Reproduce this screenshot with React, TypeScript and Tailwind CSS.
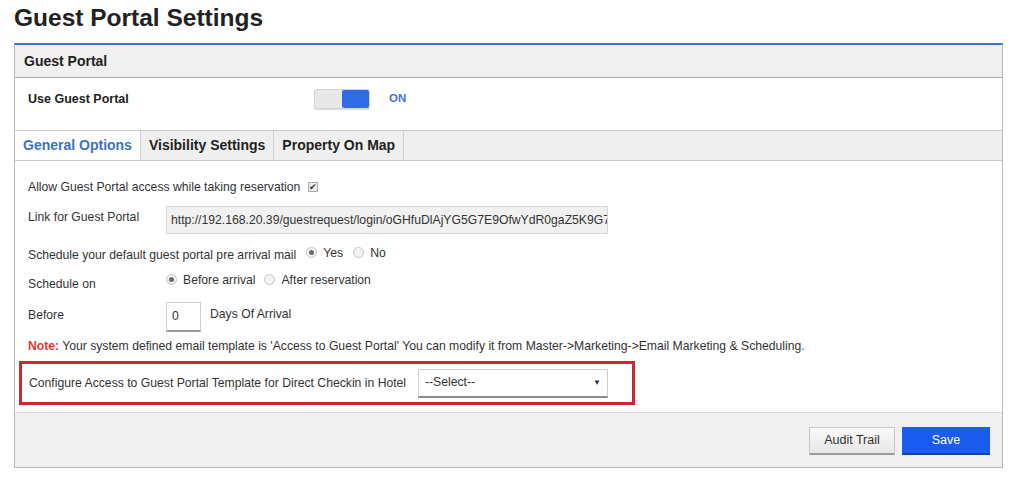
import React from "react";

function Radio({ checked }: { checked?: boolean }) {
  return (
    <span className="inline-flex h-[11px] w-[11px] items-center justify-center rounded-full border border-[#c4c4c4] bg-[#f4f4f4]">
      {checked && <span className="h-[5px] w-[5px] rounded-full bg-[#6b6b6b]" />}
    </span>
  );
}

function Tab({ label, active }: { label: string; active?: boolean }) {
  return (
    <div
      className={
        "flex h-full items-center border-r border-[#cfcfcf] px-[8px] text-[14px] font-bold " +
        (active ? "bg-white text-[#3a72c4]" : "bg-[#efefef] text-[#222]")
      }
    >
      {label}
    </div>
  );
}

export default function App() {
  return (
    <div className="min-h-[484px] bg-white font-['Liberation_Sans',Arial,sans-serif] text-[#333]">
      <h1 className="px-[14px] pt-[3px] text-[24.5px] font-bold leading-[30px] text-[#222]">Guest Portal Settings</h1>

      <div className="mx-[14px] mt-[10px] w-[989px] border border-t-2 border-[#b9b9b9] border-t-[#3f73d1]">
        {/* panel heading */}
        <div className="flex h-[33px] items-center border-b border-[#a9a9a9] bg-[#f0f0f0] px-[9px] text-[14px] font-bold text-[#222]">
          Guest Portal
        </div>

        <div className="flex h-[52px] items-center pb-[10px] pl-[13px]">
          <span className="w-[286px] text-[12.5px] font-bold text-[#222]">Use Guest Portal</span>
          <div className="flex h-[20px] w-[56px] overflow-hidden rounded-[2px] border border-[#d4d4d4] bg-[#e8e8e8] shadow-[0_1px_1px_rgba(0,0,0,0.15)]">
            <div className="flex-1" />
            <div className="w-[27px] rounded-[2px] bg-[#2f6be6]" />
          </div>
          <span className="ml-[19px] text-[11.5px] font-bold text-[#3f73d1]">ON</span>
        </div>

        {/* tabs */}
        <div className="flex h-[31px] items-stretch border-y border-[#c9c9c9] bg-[#efefef]">
          <Tab label="General Options" active />
          <Tab label="Visibility Settings" />
          <Tab label="Property On Map" />
        </div>

        <div className="flex flex-col px-[13px] pt-[12px] text-[12.2px] text-[#333]">
          <div className="flex h-[28px] items-center">
            <span>Allow Guest Portal access while taking reservation</span>
            <span className="ml-[8px] flex h-[10px] w-[10px] items-center justify-center border border-[#aaa] bg-[#eee] text-[9px] leading-none text-[#333]">
              ✔
            </span>
          </div>

          <div className="mt-[2px] flex h-[34px] items-center">
            <span className="w-[138px] pb-[6px]">Link for Guest Portal</span>
            <div className="flex h-[28px] w-[442px] items-center overflow-hidden whitespace-nowrap border border-[#d6d6d6] bg-[#f1f1f1] px-[4px] text-[#333]">
              http://192.168.20.39/guestrequest/login/oGHfuDlAjYG5G7E9OfwYdR0gaZ5K9G7
            </div>
          </div>

          <div className="mt-[5px] flex h-[26px] items-center">
            <span>Schedule your default guest portal pre arrival mail</span>
            <span className="ml-[10px] flex items-center gap-[6px] pb-[4px]">
              <Radio checked /> Yes
            </span>
            <span className="ml-[10px] flex items-center gap-[6px] pb-[4px]">
              <Radio /> No
            </span>
          </div>

          <div className="flex h-[28px] items-center">
            <span className="w-[138px] pt-[4px]">Schedule on</span>
            <span className="flex items-center gap-[6px] pb-[4px]">
              <Radio checked /> Before arrival
            </span>
            <span className="ml-[9px] flex items-center gap-[6px] pb-[4px]">
              <Radio /> After reservation
            </span>
          </div>

          <div className="mt-[4px] flex h-[34px] items-center">
            <span className="w-[138px] pb-[4px]">Before</span>
            <div className="flex h-[30px] w-[35px] items-center border border-[#cfcfcf] border-b-2 border-b-[#9a9a9a] px-[5px]">0</div>
            <span className="ml-[9px] pb-[6px]">Days Of Arrival</span>
          </div>

          <div className="mt-[4px] flex h-[16px] items-center">
            <span className="font-bold text-[#e53935]">Note:</span>
            <span className="ml-[3px]">
              Your system defined email template is 'Access to Guest Portal' You can modify it from Master-&gt;Marketing-&gt;Email Marketing &amp; Scheduling.
            </span>
          </div>

          <div className="-ml-[9px] mt-[7px] flex h-[44px] w-[616px] items-center border-[3px] border-[#c62a2e] pl-[7px]">
            <span className="w-[389px]">Configure Access to Guest Portal Template for Direct Checkin in Hotel</span>
            <div className="flex h-[29px] w-[190px] items-center justify-between border border-[#cfcfcf] border-b-2 border-b-[#8c8c8c] bg-white px-[6px] text-[#333]">
              <span>--Select--</span>
              <span className="text-[8px] text-[#333]">▼</span>
            </div>
          </div>
        </div>

        {/* footer */}
        <div className="mt-[7px] flex h-[55px] items-center justify-end gap-[7px] border-t border-[#dcdcdc] bg-[#f0f0f0] pr-[12px] pt-[2px]">
          <button className="h-[28px] w-[86px] border border-[#c8c8c8] border-b-2 border-b-[#9c9c9c] bg-gradient-to-b from-[#fafafa] to-[#e6e6e6] text-[12.5px] text-[#333]">
            Audit Trail
          </button>
          <button className="h-[28px] w-[88px] border-b-2 border-b-[#0f3fb0] bg-[#1a5cf0] text-[12.5px] text-white">
            Save
          </button>
        </div>
      </div>
    </div>
  );
}
